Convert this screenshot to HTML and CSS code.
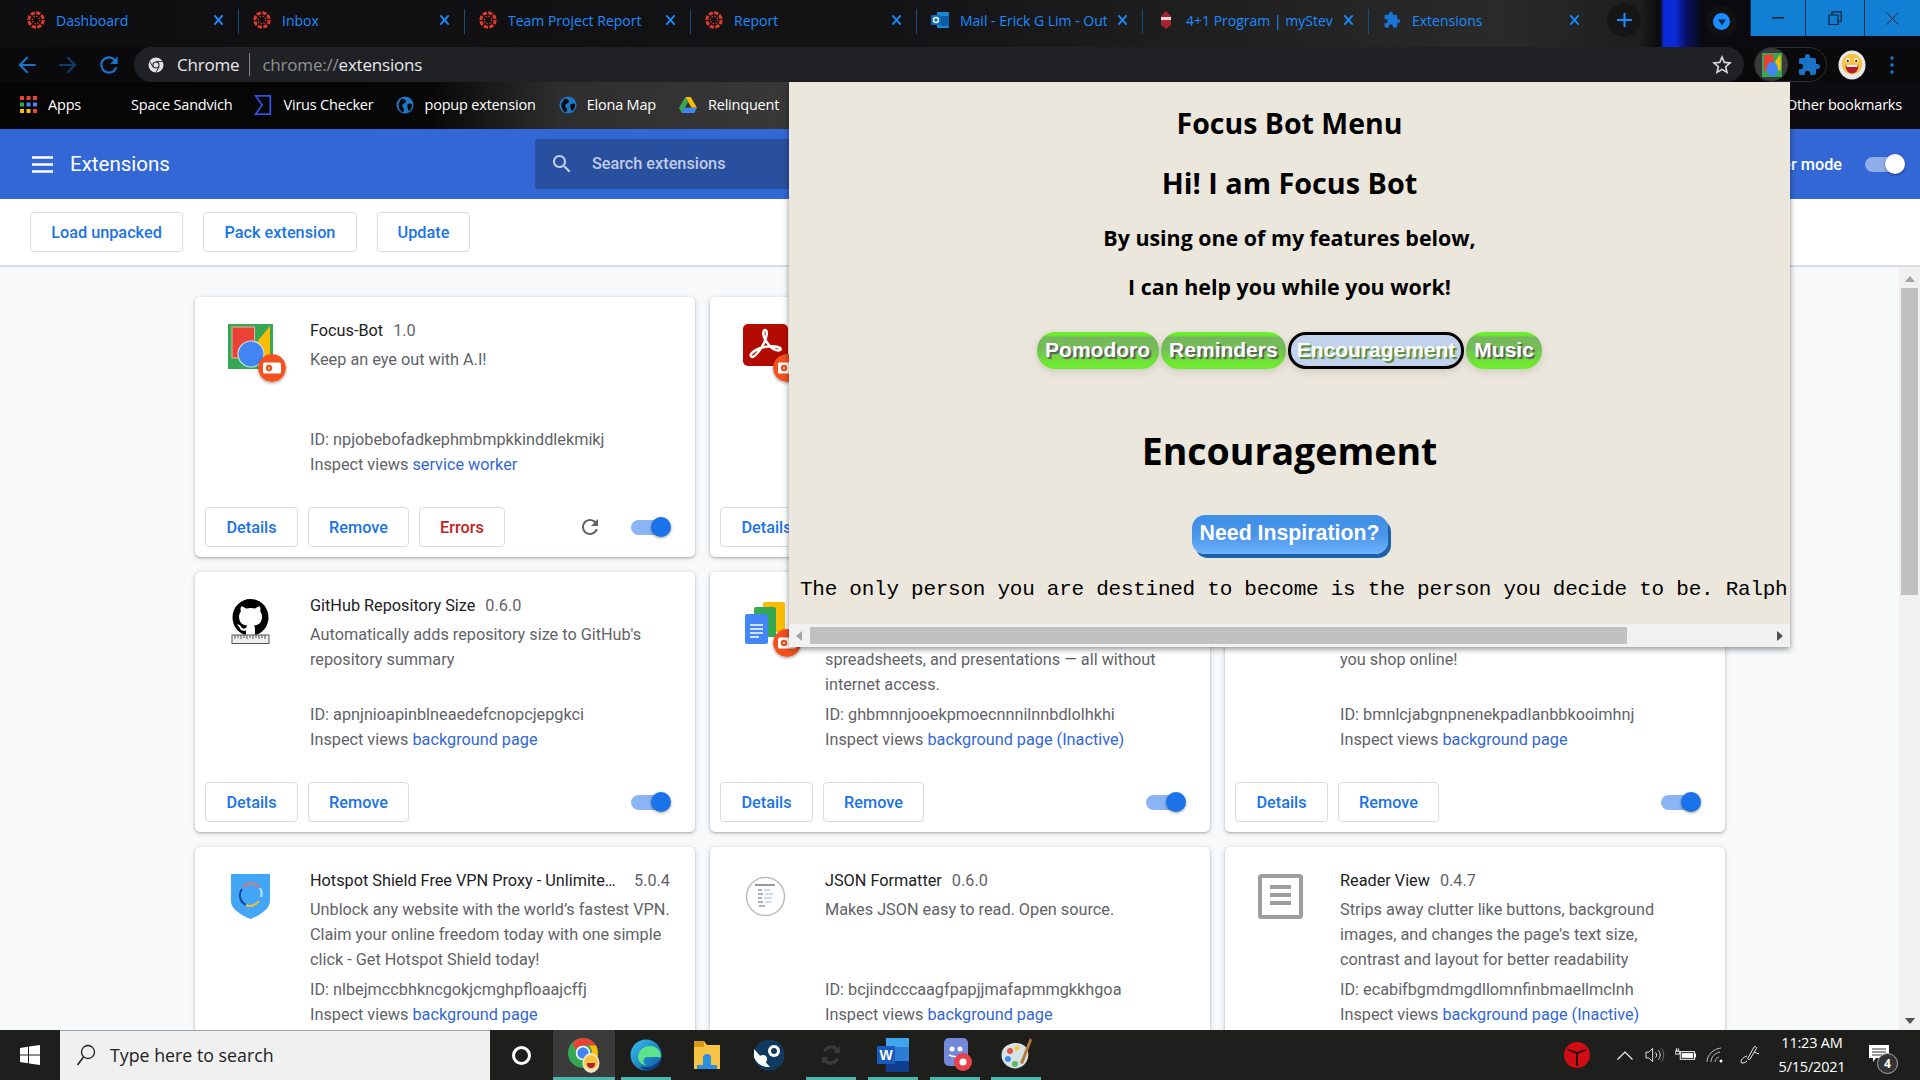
FILE: index.html
```html
<!DOCTYPE html>
<html lang="en">
<head>
<meta charset="utf-8">
<title>Extensions</title>
<link rel="stylesheet" href="styles.css">
</head>
<body>
<svg class="defs" aria-hidden="true">
  <symbol id="canvas" viewBox="0 0 24 24">
    <circle cx="12" cy="12" r="9.6" fill="none" stroke="#e2392b" stroke-width="4" stroke-dasharray="5.6 1.94"/>
    <circle cx="12" cy="12" r="5" fill="none" stroke="#e2392b" stroke-width="1.8" stroke-dasharray="1.8 2.12"/>
  </symbol>
  <symbol id="puzzle" viewBox="0 0 24 24"><path d="M20.5 11H19V7c0-1.1-.9-2-2-2h-4V3.5C13 2.12 11.88 1 10.5 1S8 2.12 8 3.5V5H4c-1.1 0-1.99.9-1.99 2v3.8H3.5c1.49 0 2.7 1.21 2.7 2.7s-1.21 2.7-2.7 2.7H2V20c0 1.1.9 2 2 2h3.8v-1.5c0-1.49 1.21-2.7 2.7-2.7 1.49 0 2.7 1.21 2.7 2.7V22H17c1.1 0 2-.9 2-2v-4h1.5c1.38 0 2.5-1.12 2.5-2.5S21.88 11 20.5 11z"/></symbol>
  <symbol id="x" viewBox="0 0 12 12"><path d="M1.5 1 10.5 11M10.5 1 1.5 11" fill="none" stroke="#1a8cff" stroke-width="2"/></symbol>
  <symbol id="reload" viewBox="0 0 24 24"><path d="M17.65 6.35C16.2 4.9 14.21 4 12 4c-4.42 0-7.99 3.58-7.99 8s3.57 8 7.99 8c3.73 0 6.84-2.55 7.73-6h-2.08c-.82 2.33-3.04 4-5.65 4-3.31 0-6-2.69-6-6s2.69-6 6-6c1.66 0 3.14.69 4.22 1.78L13 11h7V4l-2.35 2.35z"/></symbol>
  <symbol id="badge" viewBox="0 0 28 28"><circle cx="14" cy="14" r="14" fill="#f4511e"/><rect x="5" y="8.500" width="18" height="11" rx="1.500" fill="#fff"/><circle cx="11" cy="14" r="3.200" fill="#f4511e"/><circle cx="11" cy="14" r="1" fill="#fff"/></symbol>
  <symbol id="drive" viewBox="0 0 20 18"><path d="M7 0h6l7 12h-6z" fill="#fbbc04"/><path d="M7 0 0 12l3 6 7-12z" fill="#34a853"/><path d="M6 12h14l-3 6H3z" fill="#4285f4"/></symbol>
  <symbol id="globe" viewBox="0 0 20 20"><circle cx="10" cy="10" r="9.500" fill="#1e78c8"/><path d="M6 3c3 0 5 1 5 3S8 8 7 10s2 3 2 5-1 3-2 3C4 16 2 12 3 8zM13 9c2-1 4-1 5 0 0 3-1 6-4 8-1-3-2-5-1-8z" fill="#0a0a0c"/></symbol>
</svg>

<header class="browser">
  <div class="tabstrip">
    <div class="tab"><svg class="fav"><use href="#canvas"/></svg><span class="tab-title">Dashboard</span><svg class="tab-x"><use href="#x"/></svg></div>
    <div class="tab"><svg class="fav"><use href="#canvas"/></svg><span class="tab-title">Inbox</span><svg class="tab-x"><use href="#x"/></svg></div>
    <div class="tab"><svg class="fav"><use href="#canvas"/></svg><span class="tab-title">Team Project Report</span><svg class="tab-x"><use href="#x"/></svg></div>
    <div class="tab"><svg class="fav"><use href="#canvas"/></svg><span class="tab-title">Report</span><svg class="tab-x"><use href="#x"/></svg></div>
    <div class="tab">
      <svg class="fav" viewBox="0 0 18 18"><rect x="6" y="1" width="12" height="16" rx="1" fill="#1a8ad4"/><rect x="10" y="5" width="8" height="10" fill="#0a5ea8"/><rect y="4" width="10" height="10" rx="1" fill="#0f6cbd"/><circle cx="5" cy="9" r="2.500" fill="none" stroke="#fff" stroke-width="1.400"/></svg>
      <span class="tab-title">Mail - Erick G Lim - Outlook</span><svg class="tab-x"><use href="#x"/></svg>
    </div>
    <div class="tab">
      <svg class="fav" viewBox="0 0 18 18"><path d="M9 0 14 5v9l-5 4-5-4V5z" fill="#a3232f"/><rect x="4" y="6" width="10" height="3" fill="#f0d8da"/></svg>
      <span class="tab-title">4+1 Program | myStevens</span><svg class="tab-x"><use href="#x"/></svg>
    </div>
    <div class="tab tab-last"><svg class="fav fav-blue"><use href="#puzzle"/></svg><span class="tab-title">Extensions</span><svg class="tab-x"><use href="#x"/></svg></div>
    <div class="newtab"><svg viewBox="0 0 16 16" width="15" height="14" preserveAspectRatio="none"><path d="M8 0v16M0 8h16" stroke="#1a8cff" stroke-width="2.200"/></svg></div>
    <div class="tabsearch"><svg viewBox="0 0 10 10" width="8" height="8"><path d="M0 2h10L5 9z" fill="#0b2a4a"/></svg></div>
    <div class="winctl">
      <div class="winbtn"><svg width="12" height="2"><rect width="12" height="1.500" fill="#10202c"/></svg></div>
      <div class="winbtn winbtn-mid"><svg width="14" height="14" viewBox="0 0 14 14"><path d="M1 4h9v9.500H1zM4 4V.8h9.200v9.500H10" fill="none" stroke="#10202c" stroke-width="1.200"/></svg></div>
      <div class="winbtn winbtn-end"><svg width="13" height="13" viewBox="0 0 13 13"><path d="M.5.500 12.500 12.500M12.500.500.500 12.500" stroke="#10202c" stroke-width="1"/></svg></div>
    </div>
  </div>

  <div class="toolbar">
    <svg class="navicon"><path d="M20 11H7.830l5.590-5.590L12 4l-8 8 8 8 1.410-1.410L7.830 13H20v-2z" transform="scale(1.080)" fill="#1a73c8"/></svg>
    <svg class="navicon"><path d="M12 4l-1.410 1.410L16.170 11H4v2h12.170l-5.580 5.590L12 20l8-8z" transform="scale(1.080)" fill="#0e3d68"/></svg>
    <svg class="navicon"><use href="#reload" fill="#1a73c8"/></svg>
    <div class="omnibox">
      <svg class="chromeglyph" viewBox="0 0 16 16"><circle cx="8" cy="8" r="7.500" fill="#dfe1e5"/><circle cx="8" cy="8" r="3.600" fill="#202124"/><circle cx="8" cy="8" r="2.500" fill="#dfe1e5"/><path d="M8 4.500h6.500M5 10 1.800 4.500M11 10l-3.200 5.500" stroke="#202124" stroke-width=".9"/></svg>
      <span class="omni-site">Chrome</span>
      <span class="omni-sep"></span>
      <span class="omni-url"><span class="omni-dim">chrome://</span>extensions</span>
      <svg class="star" viewBox="0 0 24 24"><path fill="#dadce0" d="M22 9.240l-7.190-.62L12 2 9.190 8.630 2 9.240l5.460 4.730L5.820 21 12 17.270 18.180 21l-1.630-7.030L22 9.240zM12 15.400l-3.760 2.270 1-4.280-3.320-2.880 4.380-.38L12 6.100l1.710 4.040 4.380.38-3.320 2.880 1 4.280L12 15.400z"/></svg>
    </div>
    <div class="extpill">
      <span class="extpill-lead">
        <svg viewBox="0 0 45 45" width="20" height="24" preserveAspectRatio="none"><rect width="45" height="45" fill="#34a853"/><rect x="4" y="3" width="22" height="31" fill="#ea4335"/><path d="M42 2v31H30V15z" fill="#fbbc04"/><circle cx="23" cy="30" r="13" fill="#4285f4"/></svg>
      </span>
      <svg class="extpuzzle"><use href="#puzzle"/></svg>
    </div>
    <svg class="avatar" viewBox="0 0 30 32"><ellipse cx="15" cy="16" rx="14.500" ry="15.500" fill="#e8e8e8"/><circle cx="15" cy="15" r="11" fill="#f6c343"/><circle cx="10.500" cy="11" r="2.300" fill="#fff"/><circle cx="19.500" cy="11" r="2.300" fill="#fff"/><circle cx="10.500" cy="11.500" r="1.200" fill="#222"/><circle cx="19.500" cy="11.500" r="1.200" fill="#222"/><path d="M8 16h14c0 6-3 9-7 9s-7-3-7-9z" fill="#b3202a"/><path d="M9 16h12v2H9z" fill="#fff"/></svg>
    <svg class="menudots" viewBox="0 0 4 20"><circle cx="2" cy="3" r="1.800" fill="#1a73c8"/><circle cx="2" cy="10" r="1.800" fill="#1a73c8"/><circle cx="2" cy="17" r="1.800" fill="#1a73c8"/></svg>
  </div>

  <div class="bookmarks">
    <div class="bm bm-apps">
      <svg viewBox="0 0 17 17" width="17" height="17"><g fill="#ea4335"><rect width="4" height="4"/><rect x="6.500" width="4" height="4"/><rect x="13" width="4" height="4"/></g><g fill="#34a853"><rect y="6.500" width="4" height="4"/></g><g fill="#4285f4"><rect x="6.500" y="6.500" width="4" height="4"/><rect x="13" y="6.500" width="4" height="4"/></g><g fill="#fbbc04"><rect y="13" width="4" height="4"/><rect x="6.500" y="13" width="4" height="4"/></g><rect x="13" y="13" width="4" height="4" fill="#ea4335"/></svg>
      <span>Apps</span>
    </div>
    <div class="bm bm-space"><span>Space Sandvich</span></div>
    <div class="bm bm-virus">
      <svg viewBox="0 0 18 22" width="18" height="20"><path d="M1 1h16v20H1l7-10z" fill="none" stroke="#2f52e0" stroke-width="2"/></svg>
      <span>Virus Checker</span>
    </div>
    <div class="bm bm-popup"><svg class="bm-globe"><use href="#globe"/></svg><span>popup extension</span></div>
    <div class="bm bm-elona"><svg class="bm-globe"><use href="#globe"/></svg><span>Elona Map</span></div>
    <div class="bm bm-rel"><svg class="bm-globe"><use href="#drive"/></svg><span>Relinquent</span></div>
    <div class="bm bm-other"><span>Other bookmarks</span></div>
  </div>
</header>

<div class="ext-header">
  <svg class="hamburger" viewBox="0 0 21 17"><path d="M0 1.500h21M0 8.500h21M0 15.500h21" stroke="#fff" stroke-width="2.400"/></svg>
  <span class="ext-title">Extensions</span>
  <div class="searchbox">
    <svg viewBox="0 0 24 24" width="24" height="24"><path fill="#c4d0ea" d="M15.500 14h-.79l-.28-.27C15.410 12.590 16 11.110 16 9.500 16 5.910 13.090 3 9.500 3S3 5.910 3 9.500 5.910 16 9.500 16c1.610 0 3.090-.59 4.230-1.570l.27.28v.79l5 4.990L20.490 19l-4.990-5zm-6 0C7.010 14 5 11.990 5 9.500S7.010 5 9.500 5 14 7.010 14 9.500 11.990 14 9.500 14z"/></svg>
    <span>Search extensions</span>
  </div>
  <span class="devmode">Developer mode</span>
  <div class="toggle toggle-white"><span class="knob"></span></div>
</div>

<div class="subbar">
  <button class="btn">Load unpacked</button>
  <button class="btn">Pack extension</button>
  <button class="btn">Update</button>
</div>

<div class="content">
  <main class="cards">
    <article class="card">
      <div class="card-main">
        <div class="icon">
          <svg viewBox="0 0 45 45" width="45" height="45"><rect width="45" height="45" fill="#34a853"/><rect x="4" y="3" width="22.500" height="31" fill="#ea4335" stroke="#e6b9a8" stroke-width="1"/><path d="M42 2v31H29V18z" fill="#fbbc04"/><circle cx="23" cy="30" r="13" fill="#4285f4" stroke="#cfe0dc" stroke-width="1.200"/></svg>
          <svg class="badge"><use href="#badge"/></svg>
        </div>
        <div class="info">
          <div class="title-row"><span class="name">Focus-Bot</span><span class="ver">1.0</span></div>
          <div class="desc">Keep an eye out with A.I!</div>
          <div class="id">ID: npjobebofadkephmbmpkkinddlekmikj</div>
          <div class="views">Inspect views <a class="link">service worker</a></div>
        </div>
      </div>
      <div class="card-foot">
        <button class="btn btn-details">Details</button><button class="btn btn-remove">Remove</button><button class="btn btn-errors">Errors</button>
        <svg class="card-reload"><use href="#reload"/></svg>
        <div class="toggle"><span class="knob"></span></div>
      </div>
    </article>

    <article class="card">
      <div class="card-main">
        <div class="icon">
          <svg viewBox="0 0 45 45" width="45" height="45"><rect width="45" height="42" rx="5" fill="#b30b00"/><path d="M22 6c3 0 2 7-1 13S12 33 9 33c-3-1-1-5 6-8s18-4 22-1c2 2-1 3-4 2-5-1-10-8-12-13-1-3-1-7 1-7z" fill="none" stroke="#fff" stroke-width="2.500"/></svg>
          <svg class="badge"><use href="#badge"/></svg>
        </div>
      </div>
      <div class="card-foot">
        <button class="btn btn-details">Details</button>
      </div>
    </article>

    <article class="card"></article>

    <article class="card">
      <div class="card-main">
        <div class="icon">
          <svg viewBox="0 0 45 45" width="45" height="45"><g transform="translate(4.500 0) scale(2.250 2.300)"><path fill="#000" fill-rule="evenodd" d="M8 0C3.580 0 0 3.580 0 8c0 3.540 2.290 6.530 5.470 7.590.4.070.55-.17.55-.38 0-.19-.01-.82-.01-1.490-2.010.37-2.530-.49-2.690-.94-.09-.23-.48-.94-.82-1.130-.28-.15-.68-.52-.01-.53.63-.01 1.080.58 1.230.82.72 1.210 1.870.87 2.330.66.07-.52.28-.87.51-1.070-1.780-.2-3.640-.89-3.640-3.950 0-.87.31-1.590.82-2.150-.08-.2-.36-1.020.08-2.120 0 0 .67-.21 2.200.82.64-.18 1.320-.27 2-.27.680 0 1.360.09 2 .27 1.530-1.040 2.200-.82 2.200-.82.44 1.100.16 1.920.08 2.120.51.56.82 1.270.82 2.150 0 3.070-1.870 3.750-3.650 3.950.29.25.54.73.54 1.480 0 1.070-.01 1.930-.01 2.200 0 .21.15.46.55.38A8.013 8.013 0 0016 8c0-4.420-3.580-8-8-8z"/></g><rect x="4" y="36" width="37" height="8.500" fill="#eee" stroke="#555" stroke-width="1"/><path d="M7 36v4M10 36v3M13 36v4M16 36v3M19 36v4M22 36v3M25 36v4M28 36v3M31 36v4M34 36v3M37 36v4" stroke="#555"/></svg>
        </div>
        <div class="info">
          <div class="title-row"><span class="name">GitHub Repository Size</span><span class="ver">0.6.0</span></div>
          <div class="desc">Automatically adds repository size to GitHub's repository summary</div>
          <div class="id">ID: apnjnioapinblneaedefcnopcjepgkci</div>
          <div class="views">Inspect views <a class="link">background page</a></div>
        </div>
      </div>
      <div class="card-foot">
        <button class="btn btn-details">Details</button><button class="btn btn-remove">Remove</button>
        <div class="toggle toggle-push"><span class="knob"></span></div>
      </div>
    </article>

    <article class="card">
      <div class="card-main">
        <div class="icon">
          <svg viewBox="0 0 45 45" width="45" height="45"><rect x="20" y="3" width="22" height="30" rx="2" fill="#fbbc04"/><rect x="11" y="8" width="22" height="30" rx="2" fill="#34a853"/><rect x="2" y="15" width="23" height="30" rx="2" fill="#4285f4"/><path d="M7 26h13M7 30h13M7 34h13M7 38h9" stroke="#fff" stroke-width="1.500"/></svg>
          <svg class="badge"><use href="#badge"/></svg>
        </div>
        <div class="info">
          <div class="title-row"></div>
          <div class="desc skip-line">spreadsheets, and presentations — all without internet access.</div>
          <div class="id">ID: ghbmnnjooekpmoecnnnilnnbdlolhkhi</div>
          <div class="views">Inspect views <a class="link">background page (Inactive)</a></div>
        </div>
      </div>
      <div class="card-foot">
        <button class="btn btn-details">Details</button><button class="btn btn-remove">Remove</button>
        <div class="toggle toggle-push"><span class="knob"></span></div>
      </div>
    </article>

    <article class="card">
      <div class="card-main">
        <div class="icon"></div>
        <div class="info">
          <div class="title-row"></div>
          <div class="desc skip-line">you shop online!</div>
          <div class="id">ID: bmnlcjabgnpnenekpadlanbbkooimhnj</div>
          <div class="views">Inspect views <a class="link">background page</a></div>
        </div>
      </div>
      <div class="card-foot">
        <button class="btn btn-details">Details</button><button class="btn btn-remove">Remove</button>
        <div class="toggle toggle-push"><span class="knob"></span></div>
      </div>
    </article>

    <article class="card">
      <div class="card-main">
        <div class="icon">
          <svg viewBox="0 0 45 45" width="45" height="45"><path d="M3 0h39v27c0 8-10 14-19.500 18C13 41 3 35 3 27z" fill="#42a5f5"/><path d="M31 13a11 11 0 0 0-16 0" fill="none" stroke="#e57373" stroke-width="2"/><path d="M14 15c-4 6-2 13 4 16" fill="none" stroke="#0d47a1" stroke-width="2"/><path d="M18 31c5 2 10 0 13-4" fill="none" stroke="#fbc02d" stroke-width="2"/><path d="M32 14c2 3 2 6 1 9" fill="none" stroke="#bbdefb" stroke-width="2"/></svg>
        </div>
        <div class="info">
          <div class="title-row spread"><span class="name">Hotspot Shield Free VPN Proxy - Unlimited VPN</span><span class="ver">5.0.4</span></div>
          <div class="desc">Unblock any website with the world’s fastest VPN. Claim your online freedom today with one simple click - Get Hotspot Shield today!</div>
          <div class="id">ID: nlbejmccbhkncgokjcmghpfloaajcffj</div>
          <div class="views">Inspect views <a class="link">background page</a></div>
        </div>
      </div>
    </article>

    <article class="card">
      <div class="card-main">
        <div class="icon">
          <svg viewBox="0 0 45 45" width="45" height="45"><circle cx="22.500" cy="22.500" r="19" fill="#fff" stroke="#bdbdbd" stroke-width="1.500"/><path d="M12 11h20" stroke="#777" stroke-width="1.500"/><path d="M15 16h4M15 20h5M15 24h4M15 28h5M16 32h6" stroke="#666"/><path d="M21 16h6M22 20h8M21 24h8M22 28h6" stroke="#9fb8d8"/></svg>
        </div>
        <div class="info">
          <div class="title-row"><span class="name">JSON Formatter</span><span class="ver">0.6.0</span></div>
          <div class="desc">Makes JSON easy to read. Open source.</div>
          <div class="id">ID: bcjindcccaagfpapjjmafapmmgkkhgoa</div>
          <div class="views">Inspect views <a class="link">background page</a></div>
        </div>
      </div>
    </article>

    <article class="card">
      <div class="card-main">
        <div class="icon">
          <svg viewBox="0 0 45 45" width="45" height="45"><rect x="2" y="2" width="41" height="41" rx="1.500" fill="#fff" stroke="#9e9e9e" stroke-width="4"/><path d="M12 13h21M12 21h21M12 29h21" stroke="#9e9e9e" stroke-width="4"/></svg>
        </div>
        <div class="info">
          <div class="title-row"><span class="name">Reader View</span><span class="ver">0.4.7</span></div>
          <div class="desc">Strips away clutter like buttons, background images, and changes the page's text size, contrast and layout for better readability</div>
          <div class="id">ID: ecabifbgmdmgdllomnfinbmaellmclnh</div>
          <div class="views">Inspect views <a class="link">background page (Inactive)</a></div>
        </div>
      </div>
    </article>
  </main>

  <div class="vscroll">
    <svg class="arrow" viewBox="0 0 10 6"><path d="M5 0l5 6H0z" fill="#a3a3a3"/></svg>
    <div class="vthumb"></div>
    <svg class="arrow arrow-down" viewBox="0 0 10 6"><path d="M0 0h10L5 6z" fill="#505050"/></svg>
  </div>
</div>

<footer class="taskbar">
  <div class="start"><svg viewBox="0 0 20 20" width="20" height="20"><path d="M0 3l8-1.200V9.500H0zM9 1.600 20 0v9.500H9zM0 10.500h8v7.700L0 17zM9 10.500h11V20L9 18.400z" fill="#fff"/></svg></div>
  <div class="task-search">
    <svg viewBox="0 0 20 24" width="20" height="24"><circle cx="12" cy="9" r="6.500" fill="none" stroke="#222" stroke-width="1.300"/><path d="M7.500 14 1.500 22" stroke="#222" stroke-width="1.500"/></svg>
    <span>Type here to search</span>
  </div>
  <div class="cortana"><span class="ring"></span></div>
  <div class="task task-active on">
    <svg viewBox="0 0 32 36" width="32" height="36"><circle cx="15" cy="16" r="15" fill="#34a853"/><path d="M15 1a15 15 0 0 1 13 7.500H15a7.500 7.500 0 0 0-7 4.800L4.500 6A15 15 0 0 1 15 1z" fill="#ea4335"/><path d="M28 8.500A15 15 0 0 1 20 30l3-12a8 8 0 0 0-2-9.500z" fill="#fbbc04"/><circle cx="15" cy="16" r="6.500" fill="#4285f4" stroke="#fff" stroke-width="1.500"/><ellipse cx="23" cy="26" rx="8.500" ry="10" fill="#efe6c8"/><circle cx="23" cy="25" r="7" fill="#f6c343"/><path d="M19 26h8c0 4-2 5-4 5s-4-1-4-5z" fill="#b3202a"/></svg>
  </div>
  <div class="task on">
    <svg viewBox="0 0 32 32" width="32" height="32"><defs><linearGradient id="edge" x1="0" y1="0" x2="1" y2="1"><stop offset="0" stop-color="#35c1f1"/><stop offset="1" stop-color="#0c59a4"/></linearGradient></defs><circle cx="16" cy="16" r="15.500" fill="url(#edge)"/><path d="M31 18c0-7-5-11-11-11-7 0-12 5-12 11 0 4 3 8 8 8-4-2-3-8 1-8h8c3 0 6 1 6 0z" fill="#5ee38d"/><path d="M31 20c-1 7-7 11-13 11-3 0-6-1-8-4 5 2 14 2 21-7z" fill="#0b3f86"/></svg>
  </div>
  <div class="task">
    <svg viewBox="0 0 28 32" width="28" height="32"><path d="M1 2h10l3 4h13v24H1z" fill="#f6c344"/><path d="M1 2h10v6H1z" fill="#d9981b"/><path d="M10 26v-7a4 4 0 0 1 8 0v7h6v4H4v-4z" fill="#2a8fe0"/></svg>
  </div>
  <div class="task">
    <svg viewBox="0 0 32 32" width="32" height="32"><circle cx="16" cy="16" r="15.500" fill="#0f3a5e"/><path d="M1 10 17 28a15 15 0 0 1-16-10z" fill="#fff"/><circle cx="21" cy="12" r="6" fill="#fff"/><circle cx="21" cy="12" r="3" fill="#0f3a5e"/><circle cx="10" cy="20" r="4" fill="#fff"/></svg>
  </div>
  <div class="task on">
    <svg viewBox="0 0 24 24" width="24" height="24"><path d="M4 8a9 9 0 0 1 15-3l2-2v7h-7l2.500-2.500A6 6 0 0 0 7 9zM20 16a9 9 0 0 1-15 3l-2 2v-7h7l-2.500 2.500A6 6 0 0 0 17 15z" fill="#3a3a38"/></svg>
  </div>
  <div class="task on">
    <svg viewBox="0 0 32 36" width="32" height="36"><rect x="9" y="1" width="23" height="34" rx="1" fill="#2b7cd3"/><rect x="9" y="1" width="23" height="9" fill="#41a5ee"/><rect x="9" y="24" width="23" height="11" fill="#103f91"/><rect y="9" width="18" height="18" rx="1" fill="#185abd"/><text x="9" y="23" class="word-w">W</text></svg>
  </div>
  <div class="task task-shift on">
    <svg viewBox="0 0 32 36" width="32" height="36"><rect x="2" y="1" width="24" height="28" rx="5" fill="#7289da"/><circle cx="10" cy="12" r="2.500" fill="#fff"/><circle cx="18" cy="12" r="2.500" fill="#fff"/><path d="M7 18c4 2 10 2 14 0" stroke="#fff" stroke-width="1.500" fill="none"/><circle cx="21" cy="25" r="9" fill="#e8434a"/><circle cx="21" cy="25" r="3.500" fill="#fff"/></svg>
  </div>
  <div class="task on">
    <svg viewBox="0 0 34 36" width="34" height="36"><path d="M15 6c9-1 16 5 14 14-1 8-9 13-16 11C6 29 1 23 3 15 4 10 9 7 15 6z" fill="#d6e2e6"/><circle cx="11" cy="14" r="3" fill="#e8543f"/><circle cx="9" cy="22" r="3" fill="#3f8fe8"/><circle cx="16" cy="27" r="3" fill="#5cb85c"/><circle cx="18" cy="11" r="2.500" fill="#f2c744"/><path d="M31 1l2 2-9 24-3-1z" fill="#b67a3c"/></svg>
  </div>
  <div class="tray">
    <svg class="tray-logo" viewBox="0 0 26 26"><circle cx="13" cy="13" r="13" fill="#d00d14"/><path d="M3 8l9 4v12h2V12l9-4-1-1-9 3-9-3z" fill="#2a0608"/></svg>
    <div class="ti"><svg viewBox="0 0 16 9" width="16" height="9"><path d="M.5 8.500 8 1l7.500 7.500" fill="none" stroke="#fff" stroke-width="1.100"/></svg></div>
    <div class="ti"><svg viewBox="0 0 22 16" width="21" height="16"><path d="M1 5h3l4-4v14l-4-4H1zM11 5c1.500 2 1.500 4 0 6M14 3c2.500 3 2.500 7 0 10" fill="none" stroke="#e8e8e8" stroke-width="1"/><path d="M17 1c3.500 4 3.500 10 0 14" fill="none" stroke="#777" stroke-width="1"/></svg></div>
    <div class="ti"><svg viewBox="0 0 22 14" width="21" height="14"><rect x="5.500" y="3.500" width="15" height="8" fill="none" stroke="#fff"/><rect x="7" y="5" width="12" height="5" fill="#fff"/><rect x="20" y="5.500" width="2" height="4" fill="#fff"/><path d="M0 3h5v3H0zM1.500 0v3M3.500 0v3" stroke="#fff" fill="none"/></svg></div>
    <div class="ti"><svg viewBox="0 0 18 16" width="18" height="16"><path d="M1 15C1 8 7 2 15 1M5 15c0-5 4-9 9-10M9 15c0-2 2-5 4-5" fill="none" stroke="#bbb" stroke-width="1"/><circle cx="15" cy="14" r="1.500" fill="#fff"/></svg></div>
    <div class="ti ti-pen"><svg viewBox="0 0 22 20" width="22" height="20"><path d="M9 13 15 2c1-1 3 0 2.500 1.500L11 14c-1 1.500-3 0-2-1zM15 7l5 2M8 11c-3 1-6 3-6 6 0 2 4 1 6-1" fill="none" stroke="#eee" stroke-width="1"/></svg></div>
    <div class="clock"><span>11:23 AM</span><span>5/15/2021</span></div>
    <div class="notif">
      <svg viewBox="0 0 20 17" width="20" height="17"><path d="M0 0h20v13H7l-3 4v-4H0z" fill="#fff"/><path d="M3 4h14M3 7h14M3 10h10" stroke="#333"/></svg>
      <span class="notif-count">4</span>
    </div>
  </div>
</footer>

<section class="popup">
  <div class="popup-body">
    <h1 class="pop-h1">Focus Bot Menu</h1>
    <h2 class="pop-h2">Hi! I am Focus Bot</h2>
    <p class="pop-line pop-line-first">By using one of my features below,</p>
    <p class="pop-line">I can help you while you work!</p>
    <div class="pills">
      <button class="pill">Pomodoro</button>
      <button class="pill">Reminders</button>
      <button class="pill pill-active">Encouragement</button>
      <button class="pill">Music</button>
    </div>
    <h1 class="pop-big">Encouragement</h1>
    <button class="inspire">Need Inspiration?</button>
    <div class="quote">The only person you are destined to become is the person you decide to be. Ralph Waldo Emerson</div>
  </div>
  <div class="hscroll">
    <svg class="harrow" viewBox="0 0 6 10"><path d="M6 0v10L0 5z" fill="#a3a3a3"/></svg>
    <div class="hthumb"></div>
    <svg class="harrow harrow-right" viewBox="0 0 6 10"><path d="M0 0v10l6-5z" fill="#505050"/></svg>
  </div>
</section>
</body>
</html>
```

FILE: styles.css
```css
* { box-sizing: border-box; }
html, body { margin: 0; height: 100%; }
body {
  position: relative;
  display: flex;
  flex-direction: column;
  width: 1920px;
  height: 1080px;
  overflow: hidden;
  background: #f8f9fa;
  font-family: Roboto, "Liberation Sans", sans-serif;
}
.defs { display: none; }
button { font-family: inherit; cursor: default; }

/* browser chrome */
.browser {
  background:
    linear-gradient(90deg, transparent 1660px, #0b2bd8 1664px, #0b2bd8 1675px, #07106a 1686px, #0a0a10 1702px),
    linear-gradient(90deg, #0e0e10 0, #141416 900px, #2a2a2a 1500px, #1e1e1e 1640px, transparent 1660px);
  background-size: 100% 47px, 100% 47px;
  background-repeat: no-repeat;
  background-color: #0a0a0c;
}
.tabstrip { height: 47px; display: flex; padding-left: 13px; }
.tab {
  width: 226px;
  height: 42px;
  display: flex;
  align-items: center;
  padding: 0 15px 2px 14px;
  position: relative;
}
.tab::after {
  content: "";
  position: absolute;
  right: 0; top: 9px; bottom: 8px;
  width: 1px;
  background: #14507e;
}
.tab-last::after { display: none; }
.fav { width: 18px; height: 18px; flex: none; margin-right: 11px; }
.fav-blue { fill: #1a73d8; }
.tab-title {
  flex: 1;
  min-width: 0;
  overflow: hidden;
  white-space: nowrap;
  font: 14px "Open Sans", sans-serif;
  color: #1a8cff;
}
.tab-x { width: 11px; height: 12px; flex: none; margin-left: 10px; }
.newtab {
  width: 34px; height: 34px;
  margin: 3px 0 0 12px;
  border-radius: 50%;
  background: #161616;
  display: flex; align-items: center; justify-content: center;
}
.tabsearch {
  width: 17px; height: 17px;
  margin: 13px 0 0 72px;
  border-radius: 50%;
  background: #1a8cff;
  box-shadow: 0 0 0 7px #111;
  display: flex; align-items: center; justify-content: center;
}
.winctl { margin-left: auto; display: flex; height: 36px; }
.winbtn {
  width: 55px;
  background: #1180d4;
  border-left: 1px solid #10304a;
  display: flex; align-items: center; justify-content: center;
}
.winbtn-mid { width: 59px; }
.winbtn-end { width: 56px; }

.toolbar { height: 35px; display: flex; align-items: center; padding-left: 14px; }
.navicon { width: 26px; height: 26px; margin-right: 15px; flex: none; }
.omnibox {
  width: 1610px;
  height: 35px;
  margin-left: -3px;
  border-radius: 18px;
  background: #202124;
  display: flex;
  align-items: center;
  padding-left: 14px;
  color: #e8eaed;
  font: 17px "Open Sans", sans-serif;
  letter-spacing: -.2px;
}
.chromeglyph { width: 16px; height: 16px; margin-right: 13px; flex: none; }
.omni-sep { width: 1px; height: 23px; background: #80868b; margin: 0 12px 0 10px; }
.omni-dim { color: #8f9397; }
.star { width: 24px; height: 24px; margin-left: auto; margin-right: 10px; }
.extpill {
  margin-left: 10px;
  width: 73px; height: 35px;
  border: 1px solid #2d2e31;
  border-radius: 18px;
  display: flex; align-items: center;
  flex: none;
}
.extpill-lead {
  width: 33px; height: 33px;
  border-radius: 50%;
  background: #3a3b3d;
  display: flex; align-items: center; justify-content: center;
}
.extpuzzle { width: 24px; height: 24px; margin-left: 9px; fill: #1a73c8; }
.avatar { width: 28px; height: 30px; margin-left: 11px; flex: none; }
.menudots { width: 4px; height: 20px; margin-left: 24px; flex: none; }

.bookmarks {
  height: 47px;
  padding-bottom: 2px;
  display: flex;
  align-items: center;
  background: linear-gradient(90deg, #050505 0, #070707 430px, #2e2e2e 560px, #383838 790px, #0e0c10 800px);
  color: #fff;
  font: 14.500px "Open Sans", sans-serif;
  letter-spacing: -.2px;
}
.bm { display: flex; align-items: center; flex: none; }
.bm-apps { margin-left: 20px; gap: 11px; }
.bm-space { margin-left: 50px; }
.bm-virus { margin-left: 22px; gap: 11px; }
.bm-popup { margin-left: 22px; gap: 11px; }
.bm-elona { margin-left: 23px; gap: 10px; }
.bm-rel { margin-left: 23px; gap: 11px; }
.bm-other { margin-left: auto; margin-right: 18px; }
.bm-globe { width: 18px; height: 18px; }

/* extensions header */
.ext-header {
  height: 70px;
  background: #3367d6;
  display: flex;
  align-items: center;
  color: #fff;
  padding-left: 32px;
}
.hamburger { width: 21px; height: 17px; flex: none; }
.ext-title { font-size: 20.500px; margin-left: 17px; }
.searchbox {
  margin-left: 365px;
  width: 400px;
  height: 50px;
  border-radius: 3px;
  background: #29509f;
  display: flex;
  align-items: center;
  padding: 0 0 1px 15px;
  gap: 18px;
  color: #c0cce6;
  font-size: 16.250px;
  font-weight: 500;
}
.devmode { margin-left: auto; font-size: 16.250px; font-weight: 500; }
.toggle {
  width: 36px;
  height: 15px;
  border-radius: 8px;
  background: #8ab4f4;
  display: flex;
  align-items: center;
  justify-content: flex-end;
  flex: none;
}
.knob {
  width: 20px; height: 20px;
  margin-right: -4px;
  border-radius: 50%;
  background: #1a73e8;
  box-shadow: 0 1px 3px rgba(0,0,0,.4);
  flex: none;
}
.toggle-white { background: #8fade8; margin: 0 19px 0 23px; }
.toggle-white .knob { background: #fff; }
.toggle-push { margin-left: auto; }

.subbar {
  height: 68px;
  background: #fff;
  border-bottom: 2px solid #dadce0;
  display: flex;
  align-items: center;
  gap: 20px;
  padding-left: 30px;
}
.btn {
  height: 40px;
  padding: 0 20px;
  background: #fff;
  border: 1px solid #dadce0;
  border-radius: 4px;
  color: #1a73e8;
  font-size: 16.250px;
  font-weight: 500;
  white-space: nowrap;
}
.subbar .btn:nth-child(1) { width: 153px; padding: 0; }
.subbar .btn:nth-child(2) { width: 154px; padding: 0; }
.subbar .btn:nth-child(3) { width: 93px; padding: 0; }

.content { flex: 1; min-height: 0; display: flex; }
.cards {
  flex: 1;
  min-width: 0;
  overflow: hidden;
  display: grid;
  grid-template-columns: repeat(3, 500px);
  grid-auto-rows: 260px;
  gap: 15px;
  padding: 30px 0 0 195px;
}
.card {
  background: #fff;
  border-radius: 5px;
  box-shadow: 0 1px 2px rgba(60,64,67,.3), 0 1px 4px 1px rgba(60,64,67,.15);
  display: flex;
  flex-direction: column;
}
.card-main { height: 200px; display: flex; padding: 21px 25px 0 33px; gap: 37px; }
.icon { position: relative; width: 45px; height: 45px; margin-top: 6px; flex: none; }
.icon > svg:first-child { display: block; }
.badge {
  position: absolute;
  left: 30px; top: 30px;
  width: 28px; height: 28px;
  border-radius: 50%;
  box-shadow: 0 1px 3px rgba(0,0,0,.4);
}
.info { flex: 1; min-width: 0; font-size: 16.250px; line-height: 25px; color: #5f6368; }
.title-row { display: flex; height: 25px; margin-bottom: 4px; }
.spread { justify-content: space-between; }
.name { color: #202124; max-width: 306px; overflow: hidden; white-space: nowrap; text-overflow: ellipsis; }
.ver { margin-left: 10px; }
.desc { height: 75px; }
.skip-line { padding-top: 25px; box-sizing: content-box; height: 50px; }
.id { margin-top: 5px; }
.link { color: #3367d6; }
.card-foot { flex: 1; display: flex; align-items: center; padding: 0 28px 0 10px; gap: 10px; }
.btn-details { width: 93px; padding: 0; }
.btn-remove { width: 101px; padding: 0; }
.btn-errors { width: 86px; padding: 0; color: #c5221f; }
.card-reload { width: 24px; height: 24px; margin-left: auto; margin-right: 19px; fill: #5f6368; }

.vscroll {
  width: 21px;
  background: #f1f1f1;
  display: flex;
  flex-direction: column;
  align-items: center;
  padding: 9px 2px 6px;
}
.arrow { width: 10px; height: 6px; flex: none; }
.vthumb { width: 17px; height: 307px; margin-top: 6px; background: #c1c1c1; }
.arrow-down { margin-top: auto; }

/* taskbar */
.taskbar {
  height: 50px;
  flex: none;
  display: flex;
  align-items: stretch;
  background: #1e1f1c;
  color: #fff;
}
.start { width: 60px; display: flex; align-items: center; justify-content: center; }
.task-search {
  width: 430px;
  background: #f0f0f0;
  border: 1px solid #a0a0a0;
  border-width: 1px 0 0;
  display: flex;
  align-items: center;
  padding: 0 0 2px 16px;
  gap: 14px;
  color: #222;
  font: 17.800px "Open Sans", sans-serif;
}
.cortana { width: 63px; display: flex; align-items: center; justify-content: center; }
.ring { width: 19px; height: 19px; border: 3px solid #fff; border-radius: 50%; }
.task { width: 61.800px; display: flex; align-items: center; justify-content: center; flex: none; }
.task.on { background: linear-gradient(#4db6ac, #4db6ac) center bottom / 50px 3px no-repeat; }
.task-active.on { background: linear-gradient(#4db6ac, #4db6ac) center bottom / 100% 3px no-repeat, #3b3b3b; }
.task-shift { padding-left: 6px; }
.word-w { font: 700 14px "Liberation Sans", sans-serif; fill: #fff; text-anchor: middle; }
.tray { margin-left: auto; display: flex; align-items: center; }
.tray-logo { width: 26px; height: 26px; margin-right: 20px; flex: none; }
.ti { width: 30px; display: flex; justify-content: center; flex: none; }
.ti-pen { margin-left: 5px; }
.clock {
  width: 88px;
  margin: 0 0 2px 3px;
  display: flex;
  flex-direction: column;
  align-items: center;
  gap: 3px;
  font: 14.500px/21px "Open Sans", sans-serif;
  letter-spacing: -.2px;
}
.notif {
  position: relative;
  width: 64px;
  align-self: stretch;
  display: flex;
  align-items: flex-start;
  justify-content: center;
  padding: 15px 18px 0 0;
}
.notif-count {
  position: absolute;
  left: 21px; top: 23px;
  width: 21px; height: 21px;
  border: 1px solid #aaa;
  border-radius: 50%;
  background: #333;
  font: 700 12px/19px "Open Sans", sans-serif;
  text-align: center;
}

/* popup */
.popup {
  position: absolute;
  left: 789px; top: 82px;
  width: 1001px; height: 565px;
  background: #ebe7dc;
  box-shadow: 0 2px 6px rgba(0,0,0,.45);
  display: flex;
  flex-direction: column;
  color: #000;
}
.popup-body {
  flex: 1;
  min-height: 0;
  overflow: hidden;
  display: flex;
  flex-direction: column;
  align-items: center;
  font-family: "Open Sans", sans-serif;
}
.pop-h1 { margin: 21px 0 0; font-size: 28.500px; line-height: 40px; font-weight: 700; }
.pop-h2 { margin: 20px 0 0; font-size: 28.800px; line-height: 40px; font-weight: 700; }
.pop-line { margin: 19px 0 0; font-size: 21.400px; line-height: 30px; font-weight: 700; }
.pop-line-first { margin-top: 20px; }
.pills { margin-top: 30px; height: 37px; display: flex; gap: 2px; }
.pill {
  height: 37px;
  padding: 0 8.500px 2px;
  border: 0;
  border-radius: 18px;
  background: linear-gradient(#6cf02d 0, #6cf02d 8%, #75b85b 14%, #75bd58 45%, #6fe832 85%);
  box-shadow: 0 3px 8px rgba(0,0,0,.12);
  color: #fff;
  font: 700 21px/30px "Liberation Sans", Arial, sans-serif;
  text-shadow: 2px 2px 1px #5a5a5a;
}
.pill-active {
  padding: 0 5.500px 2px;
  background: #c3d2ec;
  border: 3px solid #000;
  text-shadow: 2px 2px 1px #4f8a30;
}
.pop-big { margin: 57px 0 0; font-size: 37.500px; line-height: 50px; font-weight: 700; }
.inspire {
  margin-top: 39px;
  width: 196px;
  height: 39px;
  flex: none;
  border: 0;
  padding: 0 0 3px;
  border-radius: 13px;
  background: linear-gradient(#3d8fe6 0, #4a94e8 50%, #6fb2ff 100%);
  box-shadow: 3px 4px 0 #1a63ab;
  color: #fff;
  font: 700 21.300px "Liberation Sans", Arial, sans-serif;
}
.quote {
  margin-top: 24px;
  align-self: flex-start;
  padding-left: 11px;
  white-space: nowrap;
  font: 21px/24px "Liberation Mono", "DejaVu Sans Mono", monospace;
  letter-spacing: -.26px;
}
.hscroll {
  height: 23px;
  flex: none;
  background: #f1f1f1;
  display: flex;
  align-items: center;
  padding: 0 7px;
}
.harrow { width: 6px; height: 10px; flex: none; }
.hthumb { width: 817px; height: 17px; margin-left: 8px; background: #c1c1c1; }
.harrow-right { margin-left: auto; }
```
